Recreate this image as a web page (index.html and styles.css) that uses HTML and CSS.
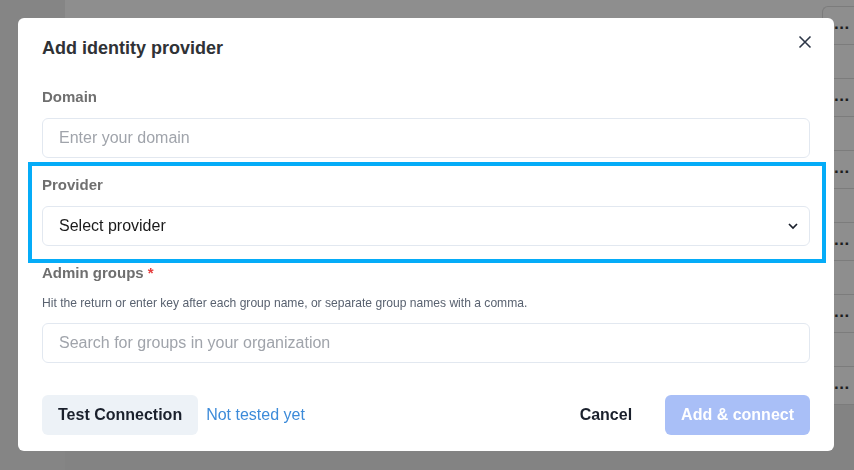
FILE: index.html
```html
<!DOCTYPE html>
<html>

<head>
    <meta charset="UTF-8">
    <title>Add identity provider</title>
    <link rel="stylesheet" href="styles.css">
</head>

<body>
    <div class="page">
        <aside class="sidebar"></aside>
        <main class="content">
            <div class="row-actions">
                <div class="kebab">...</div>
                <div class="kebab">...</div>
                <div class="kebab">...</div>
                <div class="kebab">...</div>
                <div class="kebab">...</div>
                <div class="kebab">...</div>
            </div>
        </main>
    </div>

    <div class="overlay">
        <div class="modal">
            <header class="modal-header">
                <h2>Add identity provider</h2>
                <button class="close" aria-label="Close">
                    <svg width="14" height="14" viewBox="0 0 14 14">
                        <path d="M1.5 1.5 L12.5 12.5 M12.5 1.5 L1.5 12.5" stroke="#2d3748" stroke-width="1.6" fill="none"/>
                    </svg>
                </button>
            </header>

            <div class="modal-body">
                <div class="field">
                    <label>Domain</label>
                    <input type="text" class="input" placeholder="Enter your domain">
                </div>

                <div class="field highlighted">
                    <label>Provider</label>
                    <div class="select">
                        <span>Select provider</span>
                        <svg width="12" height="8" viewBox="0 0 12 8">
                            <path d="M2 2 L6 6 L10 2" stroke="#1a202c" stroke-width="1.7" fill="none"/>
                        </svg>
                    </div>
                </div>

                <div class="field">
                    <label>Admin groups <span class="req">*</span></label>
                    <p class="helper">Hit the return or enter key after each group name, or separate group names with a comma.</p>
                    <input type="text" class="input" placeholder="Search for groups in your organization">
                </div>
            </div>

            <footer class="modal-footer">
                <div class="test">
                    <button class="btn btn-grey">Test Connection</button>
                    <span class="status">Not tested yet</span>
                </div>
                <div class="actions">
                    <button class="btn btn-ghost">Cancel</button>
                    <button class="btn btn-primary" disabled>Add &amp; connect</button>
                </div>
            </footer>
        </div>
    </div>
</body>

</html>
```

FILE: styles.css
```css
*{
    box-sizing: border-box;
    font-family: 'Liberation Sans', Arial, sans-serif;
}
body{
    margin: 0;
    width: 854px;
    height: 470px;
    overflow: hidden;
    background: #838383;
}
.page{
    display: flex;
    height: 470px;
}
.sidebar{
    width: 65px;
    background: #858585;
}
.content{
    flex: 1;
    height: 405px;
    background: #8e8e8e;
    display: flex;
    justify-content: flex-end;
    padding-top: 6px;
}
.row-actions{
    width: 32px;
    display: flex;
    flex-direction: column;
    gap: 33px;
}
.kebab{
    height: 39px;
    border: 1px solid #7c7c7c;
    border-right: 0;
    border-radius: 6px 0 0 6px;
    padding-left: 11px;
    color: #1c1c1c;
    font-size: 17px;
    font-weight: bold;
    line-height: 33px;
    letter-spacing: 0.5px;
}

.overlay{
    position: fixed;
    top: 0;
    left: 0;
    right: 0;
    bottom: 0;
    padding: 18px;
}
.modal{
    width: 816px;
    height: 433px;
    background: white;
    border-radius: 6px;
    display: flex;
    flex-direction: column;
}
.modal-header{
    display: flex;
    justify-content: space-between;
    align-items: flex-start;
    padding: 17px 13px 24px 24px;
}
.modal-header h2{
    margin: 0;
    font-size: 18px;
    line-height: 27px;
    font-weight: bold;
    color: #2f3236;
}
.close{
    width: 32px;
    height: 32px;
    margin-top: -9px;
    border: 0;
    background: none;
    display: flex;
    align-items: center;
    justify-content: center;
    padding: 0;
}
.modal-body{
    padding: 0 24px;
    display: flex;
    flex-direction: column;
    gap: 16px;
}
.field{
    display: flex;
    flex-direction: column;
}
.field label{
    font-size: 15px;
    line-height: 22px;
    font-weight: bold;
    color: #6f6f6f;
    margin-bottom: 10px;
}
.req{
    color: #e53e3e;
}
.helper{
    margin: 0 0 11px;
    font-size: 12.1px;
    line-height: 18px;
    color: #596270;
}
.input, .select{
    height: 40px;
    width: 100%;
    border: 1px solid #e2e8f0;
    border-radius: 6px;
    padding: 0 16px;
    font-size: 16px;
    color: #1a1a1a;
    background: white;
}
.input::placeholder{
    color: #a0a4ab;
}
.select{
    display: flex;
    align-items: center;
    justify-content: space-between;
    padding-right: 10px;
}
.highlighted{
    position: relative;
}
.highlighted::after{
    content: "";
    position: absolute;
    top: -12px;
    left: -14px;
    right: -16px;
    bottom: -17px;
    border: 4px solid #05acf8;
}
.modal-footer{
    display: flex;
    justify-content: space-between;
    align-items: center;
    padding: 32px 24px 16px;
}
.test, .actions{
    display: flex;
    align-items: center;
}
.btn{
    height: 40px;
    padding: 0 16px;
    border: 0;
    border-radius: 6px;
    font-size: 16px;
    font-weight: bold;
    background: none;
    color: #1a202c;
    line-height: 38px;
}
.btn-grey{
    background: #edf2f7;
}
.status{
    margin-left: 8px;
    font-size: 16px;
    color: #3d8bd9;
}
.btn-ghost{
    margin-right: 17px;
}
.btn-primary{
    background: #a9bff7;
    color: white;
}
```
